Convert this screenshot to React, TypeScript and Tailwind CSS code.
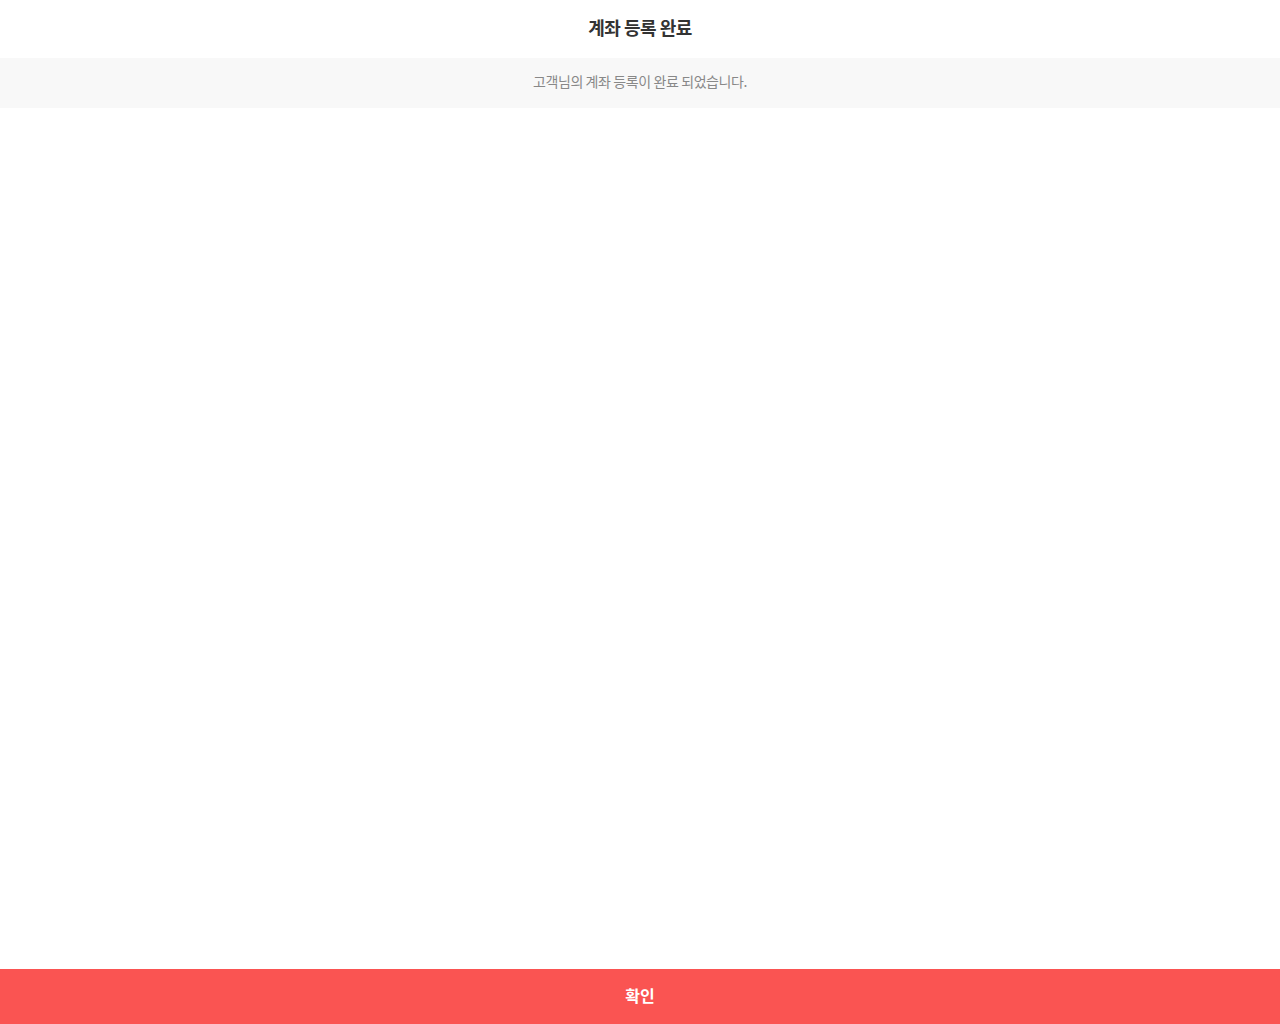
export default function App() {
  return (
    <main
      className="min-h-screen flex flex-col bg-white"
      style={{ fontFamily: '"Noto Sans CJK KR", "Noto Sans", sans-serif' }}
    >
      {/* Header */}
      <header className="h-[58px] flex items-center justify-center pb-[3px]">
        <h1 className="text-[18px] font-bold text-[#333333] tracking-[-0.5px]">계좌 등록 완료</h1>
      </header>

      {/* Notice */}
      <div className="h-[50px] bg-[#f8f8f8] flex items-center justify-center pb-[3px]">
        <p className="text-[14px] text-[#888888] tracking-[-0.4px]">고객님의 계좌 등록이 완료 되었습니다.</p>
      </div>

      <div className="flex-1" />

      {/* Confirm */}
      <button className="h-[55px] w-full bg-[#fa5452] text-white text-[16px] font-bold flex items-center justify-center pb-[3px]">
        확인
      </button>
    </main>
  );
}
